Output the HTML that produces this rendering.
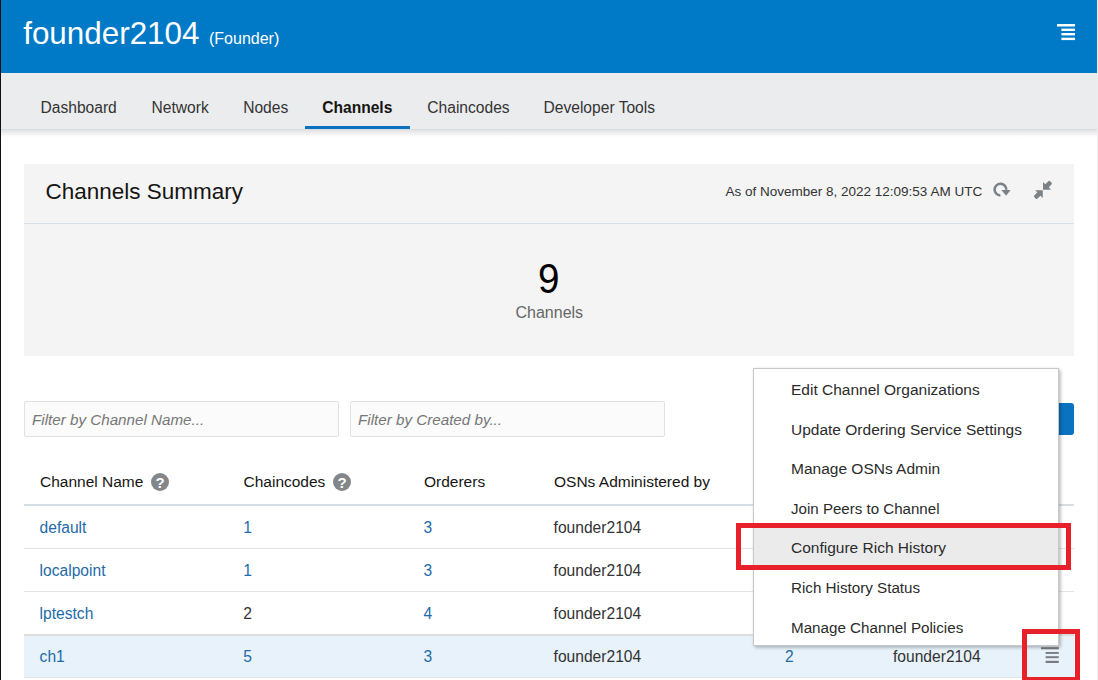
<!DOCTYPE html>
<html><head><meta charset="utf-8">
<style>
html,body{margin:0;padding:0;width:1098px;height:680px;overflow:hidden;background:#fff;position:relative;font-family:"Liberation Sans",sans-serif;}
.a{position:absolute;white-space:nowrap;line-height:1;}
#hdr{position:absolute;left:0;top:0;width:1098px;height:73px;background:#0079c6;}
#nav{position:absolute;left:0;top:73px;width:1098px;height:56px;background:#ebecee;border-bottom:1px solid #d5dee6;}
#navsh{position:absolute;left:0;top:130px;width:1098px;height:7px;background:linear-gradient(#e2e2e2,rgba(255,255,255,0));}
.nv{font-size:15.6px;color:#333;top:99.6px;}
#panel{position:absolute;left:24px;top:164px;width:1050px;height:192px;background:#f4f4f4;}
#pdiv{position:absolute;left:24px;top:223px;width:1050px;height:1px;background:#d9e1e8;}
.inp{position:absolute;top:401px;height:34px;background:#fbfbfb;border:1px solid #dfe2e4;border-radius:2px;}
.ph{font-style:italic;font-size:15.2px;color:#777;}
.th{font-size:15.5px;color:#161513;}
.td{font-size:15.6px;color:#333;}
.lk{color:#1e6ba8;}
.hl{position:absolute;left:24px;width:1050px;height:1px;background:#e3e3e3;}
.q{position:absolute;width:18px;height:18px;border-radius:50%;background:#83878a;color:#fff;font:bold 15px/19px "Liberation Sans",sans-serif;text-align:center;}
#menu{position:absolute;left:753px;top:368px;width:304px;height:276px;background:#fff;border:1px solid #c6c8ca;box-shadow:2px 2px 3px rgba(0,0,0,0.22),0 0 3px rgba(0,0,0,0.08);}
.mi{font-size:15.5px;color:#2b2b2b;}
.red{position:absolute;border:5px solid #e8202a;}
</style></head><body>
<div id="hdr"></div>
<span class="a" style="left:23.2px;top:18.4px;font-size:31.4px;color:#fff;">founder2104</span>
<span class="a" style="left:209px;top:30.8px;font-size:16px;color:#fff;">(Founder)</span>
<svg class="a" style="left:1055px;top:22px" width="22" height="20" viewBox="0 0 22 20">
<rect x="2" y="2" width="18" height="2.5" fill="#fff"/>
<rect x="6.4" y="6.6" width="13.6" height="2.4" fill="#fff"/>
<rect x="6.4" y="11" width="13.6" height="2.4" fill="#fff"/>
<rect x="6.4" y="15.7" width="13.6" height="2.4" fill="#fff"/>
</svg>
<div id="nav"></div>
<div id="navsh"></div>
<span class="a nv" style="left:40.5px;">Dashboard</span>
<span class="a nv" style="left:151.5px;">Network</span>
<span class="a nv" style="left:243.2px;">Nodes</span>
<span class="a nv" style="left:322.2px;font-weight:bold;color:#161513;">Channels</span>
<span class="a nv" style="left:427.3px;">Chaincodes</span>
<span class="a nv" style="left:543.5px;">Developer Tools</span>
<div style="position:absolute;left:305px;top:126px;width:105px;height:3px;background:#0a72c1;"></div>

<div id="panel"></div>
<div id="pdiv"></div>
<span class="a" style="left:45.5px;top:180.5px;font-size:22.5px;color:#161513;">Channels Summary</span>
<span class="a" style="left:725.5px;top:185px;font-size:13.5px;color:#333;">As of November 8, 2022 12:09:53 AM UTC</span>
<svg class="a" style="left:990px;top:178px" width="24" height="24" viewBox="0 0 24 24">
<path d="M10.4 17.4 A5.85 5.85 0 1 1 16.3 11.8" fill="none" stroke="#7b8287" stroke-width="2.5"/>
<path d="M11.4 12.1 L20.6 12.1 L16.1 17.8 Z" fill="#7b8287"/>
</svg>
<svg class="a" style="left:1031px;top:178px" width="24" height="24" viewBox="0 0 24 24">
<path d="M12.0 4.0 L14.3 6.35 L17.6 3.1 Q18.35 2.6 19.1 3.2 L20.6 4.8 Q21.2 5.6 20.7 6.2 L17.8 9.35 L19.95 11.65 L12.0 11.65 Z" fill="#7b8287"/>
<path d="M4.05 12.2 L11.8 12.2 L11.8 19.95 L9.5 17.8 L6.2 20.8 Q5.5 21.3 4.8 20.7 L3.2 19.1 Q2.6 18.4 3.1 17.7 L6.35 14.3 Z" fill="#7b8287"/>
</svg>
<span class="a" style="left:537.5px;top:257.7px;font-size:42px;color:#000;transform:scaleX(0.92);transform-origin:0 0;">9</span>
<span class="a" style="left:515.5px;top:304.7px;font-size:16px;color:#666;">Channels</span>

<div class="inp" style="left:24px;width:313px;"></div>
<div class="inp" style="left:350px;width:313px;"></div>
<span class="a ph" style="left:32px;top:412.4px;">Filter by Channel Name...</span>
<span class="a ph" style="left:358px;top:412.4px;">Filter by Created by...</span>
<div style="position:absolute;left:1040px;top:403px;width:34px;height:32px;background:#0a72c1;border-radius:3px;"></div>

<span class="a th" style="left:40px;top:473.5px;">Channel Name</span>
<div class="q" style="left:151px;top:473px;">?</div>
<span class="a th" style="left:243.5px;top:473.5px;">Chaincodes</span>
<div class="q" style="left:333px;top:473px;">?</div>
<span class="a th" style="left:424px;top:473.5px;">Orderers</span>
<span class="a th" style="left:554px;top:473.5px;">OSNs Administered by</span>
<div class="hl" style="top:504px;height:2px;background:#d6dee5;"></div>
<div class="hl" style="top:548px;"></div>
<div class="hl" style="top:591px;"></div>
<div style="position:absolute;left:24px;top:634px;width:1050px;height:41px;background:#e8f2fa;border-top:2px solid #dddddd;"></div>
<div class="hl" style="top:677px;"></div>

<span class="a td lk" style="left:39.6px;top:519.5px;">default</span>
<span class="a td lk" style="left:243.2px;top:519.5px;">1</span>
<span class="a td lk" style="left:423.6px;top:519.5px;">3</span>
<span class="a td" style="left:553.6px;top:519.5px;">founder2104</span>

<span class="a td lk" style="left:39.6px;top:562.5px;">localpoint</span>
<span class="a td lk" style="left:243.2px;top:562.5px;">1</span>
<span class="a td lk" style="left:423.6px;top:562.5px;">3</span>
<span class="a td" style="left:553.6px;top:562.5px;">founder2104</span>

<span class="a td lk" style="left:39.6px;top:605.5px;">lptestch</span>
<span class="a td" style="left:243.2px;top:605.5px;">2</span>
<span class="a td lk" style="left:423.6px;top:605.5px;">4</span>
<span class="a td" style="left:553.6px;top:605.5px;">founder2104</span>

<span class="a td lk" style="left:39.6px;top:648.5px;">ch1</span>
<span class="a td lk" style="left:243.2px;top:648.5px;">5</span>
<span class="a td lk" style="left:423.6px;top:648.5px;">3</span>
<span class="a td" style="left:553.6px;top:648.5px;">founder2104</span>
<span class="a td lk" style="left:785px;top:648.5px;">2</span>
<span class="a td" style="left:893px;top:648.5px;">founder2104</span>
<svg class="a" style="left:1040px;top:646px" width="20" height="18" viewBox="0 0 20 18">
<rect x="1" y="1.2" width="17.8" height="2.1" fill="#7a7d80"/>
<rect x="5.6" y="6" width="13.2" height="1.9" fill="#7a7d80"/>
<rect x="5.6" y="10.2" width="13.2" height="2" fill="#7a7d80"/>
<rect x="5.6" y="14.8" width="13.2" height="2.2" fill="#7a7d80"/>
</svg>

<div id="menu"></div>
<div style="position:absolute;left:754px;top:528px;width:304px;height:39px;background:#ebebeb;"></div>
<span class="a mi" style="left:791px;top:381.8px;">Edit Channel Organizations</span>
<span class="a mi" style="left:791px;top:421.8px;">Update Ordering Service Settings</span>
<span class="a mi" style="left:791px;top:460.9px;">Manage OSNs Admin</span>
<span class="a mi" style="left:791px;top:500.9px;font-size:15.1px;">Join Peers to Channel</span>
<span class="a mi" style="left:791px;top:540.2px;">Configure Rich History</span>
<span class="a mi" style="left:791px;top:580.0px;font-size:15.2px;">Rich History Status</span>
<span class="a mi" style="left:791px;top:619.6px;font-size:15.2px;">Manage Channel Policies</span>

<div class="red" style="left:736px;top:523px;width:325px;height:37px;"></div>
<div class="red" style="left:1022px;top:629px;width:48px;height:43px;"></div>

<div style="position:absolute;left:0;top:0;width:1px;height:680px;background:#111;"></div>
<div style="position:absolute;left:1097px;top:0;width:1px;height:680px;background:#efefef;"></div>
</body></html>
